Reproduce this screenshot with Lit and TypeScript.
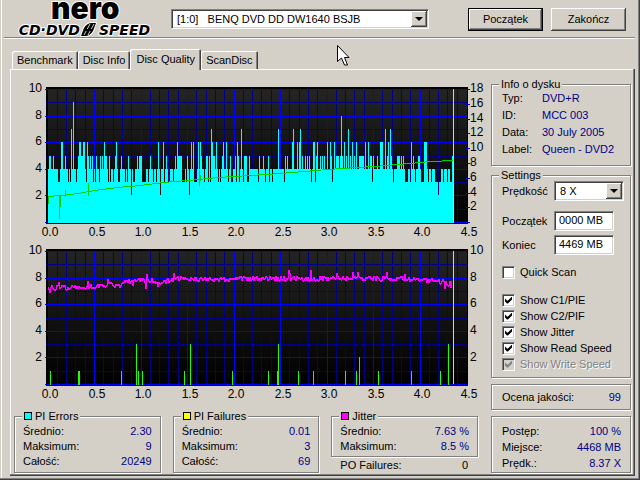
import { LitElement, html, svg, css } from "lit";
import { customElement } from "lit/decorators.js";

const LEFT = 48;
const STEP = 46.5;
const DATA_END = 453;

/** Turns a list of [value, columns] groups into a column -> value map. */
const levels = (groups: [number, number[]][]) => {
  const m = new Map<number, number>();
  for (const [v, cols] of groups) for (const c of cols) m.set(c, v);
  return m;
};

const piErrors = levels([
  [3, [58, 59, 68, 70, 76, 86, 93, 95, 99, 108, 110, 113, 118, 119, 125, 127, 133, 134, 142, 143, 144, 145, 148, 153, 156, 164, 168, 169, 173, 182, 183, 184, 186, 194, 195, 196, 204, 208, 210, 218, 220, 228, 231, 232, 236, 239, 243, 247, 248, 258, 265, 269, 272, 284, 311, 315, 332, 372, 393, 405, 406, 407, 410, 415, 421, 422, 423, 428, 431, 435, 436, 437, 439, 440, 443, 447, 450, 451]],
  [2, [131, 160, 189, 438]],
  [5, [49, 50, 53, 65, 78, 81, 82, 88, 90, 92, 96, 100, 102, 105, 106, 109, 115, 121, 128, 137, 139, 140, 141, 150, 166, 175, 178, 179, 180, 181, 187, 201, 206, 207, 209, 213, 214, 222, 230, 235, 238, 245, 246, 249, 244, 259, 263, 268, 285, 287, 302, 305, 307, 309, 316, 320, 322, 324, 331, 336, 337, 338, 340, 342, 346, 350, 354, 359, 360, 361, 362, 363, 370, 371, 373, 377, 387, 391, 397, 398, 399, 401, 403, 413, 418, 419, 452]],
  [6, [61, 62, 79, 80, 83, 84, 87, 104, 116, 158, 163, 177, 191, 193, 198, 200, 212, 216, 223, 226, 237, 292, 297, 299, 313, 314, 317, 327, 330, 334, 344, 352, 356, 365, 368, 380, 381, 382, 388, 411, 424, 425, 426]],
  [7, [71, 211, 241, 278, 293, 300, 348, 385, 390]],
  [8, [341]],
  [9, [73]],
]);

const piFailures: [number, number][] = [
  [50, 1], [78, 1], [79, 1], [121, 1], [136, 3], [138, 1], [142, 1], [184, 1], [190, 3], [232, 1],
  [268, 1], [277, 1], [278, 3], [298, 1], [313, 1], [345, 1], [356, 1], [359, 2], [378, 1],
  [411, 1], [440, 1], [448, 3],
];

const readSpeed = [
  [48, 196], [60, 195], [78, 193], [94, 190], [117, 187], [140, 185], [163, 182], [187, 180],
  [218, 177], [250, 175], [280, 173], [327, 169], [373, 166], [410, 163], [430, 161], [453, 160],
].map((p) => p.join(",")).join(" ");

/** Mean jitter level (pixel row) at a column. */
const jitterKeys = [[48, 287], [85, 287], [104, 284], [108, 282], [114, 285], [120, 285], [126, 281], [140, 280], [165, 281], [174, 278], [200, 279], [260, 278], [400, 278], [430, 280], [443, 281], [447, 284], [453, 282]];
const jitterMean = (x: number) => {
  const i = Math.max(1, jitterKeys.findIndex((k) => k[0] >= x));
  const [x0, y0] = jitterKeys[i - 1];
  const [x1, y1] = jitterKeys[i];
  return y0 + ((y1 - y0) * (x - x0)) / (x1 - x0);
};
const jitterPeaks: Record<number, number> = { 49: 5, 58: -5, 87: -6, 107: -4, 132: 4, 146: -6, 145: 8, 157: 5, 173: -5, 288: -8, 289: -5, 310: -8, 336: -5, 352: -6, 357: -6, 386: -6, 404: -4, 444: 6, 450: 4 };
const jitterPath = () => {
  let seed = 7;
  let d = "";
  let last = 287;
  for (let x = LEFT; x < 452; x++) {
    seed = (seed * 1103515245 + 12345) % 2147483648;
    const noise = ((seed >> 12) % 5) - 2;
    const y = Math.round(jitterMean(x) + (jitterPeaks[x] ?? noise));
    const top = Math.min(y, last);
    d += `M${x} ${top}h1v${Math.max(2, Math.abs(y - last) + 1)}h-1z`;
    last = y;
  }
  return d;
};

@customElement("scan-chart")
class ScanChart extends LitElement {
  static properties = { kind: {} };
  declare kind: string;

  static styles = css`
    :host { display: block; }
    .plot { display: block; width: 100%; height: auto; }
    .axis { font: 12px "Liberation Sans", Arial, sans-serif; fill: #000; }
    .end { text-anchor: end; }
    .mid { text-anchor: middle; }
    .minor { stroke: #000084; }
    .major { stroke: #0000ff; }
    .crisp { shape-rendering: crispEdges; }
  `;

  private frame(top: number) {
    const rows = Array.from({ length: 11 }, (_, i) => i);
    const cols = Array.from({ length: 46 }, (_, i) => i);
    const py = (i: number) => Math.round(top + 2 + (i * 133) / 10) + 0.5;
    const px = (i: number) => Math.floor(LEFT + (i * STEP) / 5) + 0.5;
    const line = (major: boolean) => svg`
      ${cols.filter((i) => (i % 5 === 0) === major && i > 0 && i < 45).map((i) => svg`<line class=${major ? "major" : "minor"} x1=${px(i)} x2=${px(i)} y1=${top + 2} y2=${top + 136}></line>`)}
      ${rows.filter((i) => (i % 2 === 0) === major).map((i) => svg`<line class=${major ? "major" : "minor"} x1=${major ? 45 : 46} x2="467" y1=${py(i)} y2=${py(i)}></line>`)}`;
    return svg`
      <defs><linearGradient id="bg" x1="0" y1="0" x2="0" y2="1"><stop offset="0" stop-color="#242424"></stop><stop offset="1" stop-color="#000"></stop></linearGradient></defs>
      <rect x="46" y=${top} width="422" height="137" fill="#000"></rect>
      <rect x="48" y=${top + 2} width="419" height="134" fill="url(#bg)"></rect>
      <g class="crisp">${line(false)}${line(true)}</g>
      ${[10, 8, 6, 4, 2].map((v, i) => svg`<text class="axis end" x="42" y=${Math.round(top + 5 + i * 26.7)}>${v}</text>`)}
      ${Array.from({ length: 10 }, (_, i) => svg`<text class="axis mid" x=${Math.round(50 + i * 46.5)} y=${top + 149}>${(i / 2).toFixed(1)}</text>`)}`;
  }

  private errors() {
    const y = (v: number) => Math.round(222 - v * 13.3);
    const bars = [];
    for (let x = LEFT; x < DATA_END; x++) {
      const t = y(piErrors.get(x) ?? 4);
      bars.push(svg`<rect x=${x} y=${t} width="1" height=${223 - t}></rect>`);
    }
    return svg`<svg class="plot" viewBox="14 78 474 162" role="img" aria-label="PI Errors">
      ${this.frame(87)}
      <g class="crisp" fill="#00ffff">${bars}</g>
      <g class="crisp" fill="none" stroke="#00d000"><polyline points=${readSpeed} transform="translate(.5 .5)"></polyline>
        <path d="M48.5 196V204M59.5 195V219M60.5 195V207M65.5 190V197M88.5 183V196M199.5 170V186M200.5 175V181"></path></g>
      <path class="crisp" d="M453.5 89V223" stroke="#d4d0c8"></path>
      ${Array.from({ length: 10 }, (_, i) => svg`<path class="crisp major" d=${`M466 ${Math.round(89 + i * 14.8)}.5H470`}></path>`)}
      ${[18, 16, 14, 12, 10, 8, 6, 4, 2].map((v, i) => svg`<text class="axis" x="470" y=${Math.round(92 + i * 14.8)}>${v}</text>`)}
    </svg>`;
  }

  private failures() {
    return svg`<svg class="plot" viewBox="14 240 474 170" role="img" aria-label="PI Failures, Jitter">
      ${this.frame(249)}
      <g class="crisp" fill="#20ff00">${piFailures.map(([x, v]) => svg`<rect x=${x} y=${Math.round(384 - v * 13.3)} width="1" height=${Math.round(v * 13.3) + 1}></rect>`)}</g>
      <path class="crisp" d=${jitterPath()} fill="#ff00ff"></path>
      <path class="crisp" d="M453.5 251V384" stroke="#d4d0c8"></path>
      ${[10, 8, 6, 4, 2].map((v, i) => svg`<text class="axis" x="470" y=${Math.round(254 + i * 26.7)}>${v}</text>`)}
    </svg>`;
  }

  render() {
    return this.kind === "errors" ? this.errors() : this.failures();
  }
}

@customElement("app-root")
class AppRoot extends LitElement {
  static styles = css`
    :host { display: block; font: 11px/16px "Liberation Sans", Arial, sans-serif; color: #000; }
    * { box-sizing: border-box; }
    button, select, input { font: inherit; color: inherit; border-radius: 0; margin: 0; }
    .window {
      min-height: 100vh; display: flex; flex-direction: column; background: #d4d0c8;
      padding: 0 5px 4px 4px; position: relative;
      box-shadow: inset -1px -1px #404040, inset -2px -2px #808080, inset 1px 0 #d4d0c8, inset 2px 0 #fff;
    }
    .header {
      display: grid; grid-template-columns: 167px minmax(0, 1fr) auto; height: 39px;
      border-bottom: 1px solid #fff; box-shadow: inset 0 -1px #808080; padding: 0 9px 0 0;
    }
    .logo { display: block; margin-left: 8px; }
    .nero { font: 900 30px Inter, sans-serif; }
    .speed { font: italic bold 14px "DejaVu Sans", sans-serif; }
    .halo { stroke: #fff; stroke-width: 2px; paint-order: stroke; stroke-linejoin: round; }
    .drive { margin: 9px 39px 0 0; }
    .combo { position: relative; display: block; height: 20px; }
    .combo select, .field {
      appearance: none; display: block; width: 100%; height: 20px; padding: 0 5px; background: #fff;
      border: 1px solid; border-color: #808080 #fff #fff #808080; box-shadow: inset 1px 1px #404040, inset -1px -1px #d4d0c8;
    }
    .drop {
      position: absolute; top: 2px; right: 2px; width: 16px; height: 16px; background: #d4d0c8; pointer-events: none;
      box-shadow: inset -1px -1px #404040, inset 1px 1px #fff, inset -2px -2px #808080;
    }
    .drop::after { content: ""; position: absolute; left: 4px; top: 6px; border: 4px solid transparent; border-top-color: #000; border-bottom: 0; }
    .actions { display: flex; gap: 8px; padding-top: 8px; }
    .push {
      width: 75px; height: 23px; padding: 0 0 2px; background: #d4d0c8; border: 0;
      box-shadow: inset -1px -1px #404040, inset 1px 1px #fff, inset -2px -2px #808080;
    }
    .default { border: 1px solid #000; }
    .tabs { display: flex; align-items: flex-end; height: 30px; padding-left: 8px; }
    .tab {
      height: 18px; padding: 0 5px; background: #d4d0c8; border: 0; border-radius: 2px 2px 0 0; white-space: nowrap;
      box-shadow: inset 1px 1px #fff, inset -1px 0 #404040, inset -2px 0 #808080; line-height: 18px;
    }
    .active { height: 21px; margin-bottom: -1px; position: relative; padding: 0 6px 2px; }
    .panel {
      flex: 1; margin-left: 6px; padding: 9px 4px 3px; display: grid; grid-template-columns: minmax(0, 1fr) 140px; gap: 3px;
      box-shadow: inset -1px -1px #404040, inset -2px -2px #808080, inset 1px 1px #fff;
    }
    .stats { display: grid; grid-template-columns: repeat(3, minmax(0, 1fr)); gap: 12px; margin-right: 10px; line-height: 15px; }
    .box { margin: 0; padding: 0 10px; min-width: 0; border: 1px solid #808080; box-shadow: 1px 1px #fff, inset 1px 1px #fff; }
    .box legend { line-height: 12px; padding: 0 2px; margin-left: -3px; background: #d4d0c8; }
    .stat { padding: 2px 8px 2px; }
    .stat .title { margin-left: -1px; display: flex; align-items: center; gap: 3px; }
    .swatch { width: 8px; height: 8px; border: 1px solid #000; }
    .cyan { background: #00ffff; }
    .yellow { background: #ffff00; }
    .magenta { background: #ff00ff; }
    dl { margin: 0; }
    .row { display: flex; justify-content: space-between; white-space: nowrap; }
    dt, dd { margin: 0; }
    dd { color: #000084; }
    .po { padding: 1px 10px 0 9px; }
    .po dd { color: #000; }
    .info { padding-bottom: 7px; line-height: 17px; }
    .info .row { display: grid; grid-template-columns: 40px 1fr; }
    .settings { margin-top: 3px; padding: 0 6px 5px 10px; }
    .pair { display: grid; grid-template-columns: 52px 1fr; align-items: center; }
    .start { margin-top: 10px; padding-right: 10px; }
    .stop { margin-top: 4px; padding-right: 10px; }
    .field { padding: 0 4px 2px; }
    .check { display: flex; align-items: center; gap: 5px; height: 16px; white-space: nowrap; }
    .quick { margin: 9px 0 12px; }
    .check input {
      appearance: none; width: 13px; height: 13px; background: #fff; position: relative; border: 1px solid;
      border-color: #808080 #fff #fff #808080; box-shadow: inset 1px 1px #404040, inset -1px -1px #d4d0c8;
    }
    .check input:checked::after {
      content: ""; position: absolute; left: 2px; top: 2px; width: 7px; height: 7px; background: #000;
      clip-path: polygon(0 2px, 2px 4px, 3px 4px, 7px 0, 7px 3px, 3px 7px, 2px 7px, 0 5px);
    }
    .off { color: #808080; text-shadow: 1px 1px #fff; }
    .check.off input { background: #d4d0c8; }
    .check.off input:checked::after { background: #808080; }
    .score { margin-top: 6px; padding: 4px 9px 4px 10px; }
    .progress { margin-top: 6px; padding: 6px 9px 1px 10px; }
    .pointer { position: absolute; left: 337px; top: 45px; }
  `;

  private rows(items: [string, string][]) {
    return html`<dl>${items.map(([k, v]) => html`<div class="row"><dt>${k}</dt><dd>${v}</dd></div>`)}</dl>`;
  }

  private stat(color: string, title: string, items: [string, string][]) {
    return html`<fieldset class="box stat"><legend class="title"><span class="swatch ${color}"></span>${title}</legend>${this.rows(items)}</fieldset>`;
  }

  private check(label: string, checked = true, extra = "") {
    return html`<label class="check ${extra}"><input type="checkbox" ?checked=${checked} ?disabled=${extra === "off"} />${label}</label>`;
  }

  render() {
    return html`
      <div class="window">
        <header class="header">
          <svg class="logo" width="150" height="37" viewBox="12 0 150 37" role="img" aria-label="nero CD-DVD Speed">
            <text class="nero halo" x="51" y="19">nero</text>
            <text class="speed halo" x="80" y="35" text-anchor="end">CD·DVD</text>
            <text class="speed halo" x="99" y="35">SPEED</text>
            <path class="halo" d="M81 36L84 28Q87 23 92 23H96L93 31Q90 36 85 36Z"></path>
            <path d="M84 35L90 24M88 35L94 24" stroke="#d4d0c8" fill="none"></path>
            <path d="M85 30H92" stroke="#000" stroke-width="2"></path>
          </svg>
          <div class="drive">
            <label class="combo"><select aria-label="Drive"><option>[1:0] &nbsp; BENQ DVD DD DW1640 BSJB</option></select><span class="drop"></span></label>
          </div>
          <div class="actions"><button class="push default">Początek</button><button class="push">Zakończ</button></div>
        </header>
        <div class="tabs" role="tablist">
          <button class="tab" role="tab">Benchmark</button>
          <button class="tab" role="tab">Disc Info</button>
          <button class="tab active" role="tab" aria-selected="true">Disc Quality</button>
          <button class="tab" role="tab">ScanDisc</button>
        </div>
        <main class="panel">
          <section>
            <scan-chart kind="errors"></scan-chart>
            <scan-chart kind="failures"></scan-chart>
            <div class="stats">
              ${this.stat("cyan", "PI Errors", [["Średnio:", "2.30"], ["Maksimum:", "9"], ["Całość:", "20249"]])}
              ${this.stat("yellow", "PI Failures", [["Średnio:", "0.01"], ["Maksimum:", "3"], ["Całość:", "69"]])}
              <div>
                ${this.stat("magenta", "Jitter", [["Średnio:", "7.63 %"], ["Maksimum:", "8.5 %"]])}
                <dl class="row po"><dt>PO Failures:</dt><dd>0</dd></dl>
              </div>
            </div>
          </section>
          <aside>
            <fieldset class="box info"><legend>Info o dysku</legend>
              ${this.rows([["Typ:", "DVD+R"], ["ID:", "MCC 003"], ["Data:", "30 July 2005"], ["Label:", "Queen - DVD2"]])}
            </fieldset>
            <fieldset class="box settings"><legend>Settings</legend>
              <div class="pair"><label for="rate">Prędkość</label><span class="combo"><select id="rate"><option>8 X</option></select><span class="drop"></span></span></div>
              <div class="pair start"><label for="from">Początek</label><input class="field" id="from" value="0000 MB" /></div>
              <div class="pair stop"><label for="to">Koniec</label><input class="field" id="to" value="4469 MB" /></div>
              ${this.check("Quick Scan", false, "quick")}
              ${this.check("Show C1/PIE")}
              ${this.check("Show C2/PIF")}
              ${this.check("Show Jitter")}
              ${this.check("Show Read Speed")}
              ${this.check("Show Write Speed", true, "off")}
            </fieldset>
            <div class="box score">${this.rows([["Ocena jakości:", "99"]])}</div>
            <div class="box progress">${this.rows([["Postęp:", "100 %"], ["Miejsce:", "4468 MB"], ["Prędk.:", "8.37 X"]])}</div>
          </aside>
        </main>
        <svg class="pointer" width="13" height="21" viewBox="0 0 13 21" aria-hidden="true">
          <path d="M.5 .5V16.5L4.5 13L7.5 20H10.5L7.5 12.5H12Z" fill="#fff" stroke="#000"></path>
        </svg>
      </div>
    `;
  }
}
